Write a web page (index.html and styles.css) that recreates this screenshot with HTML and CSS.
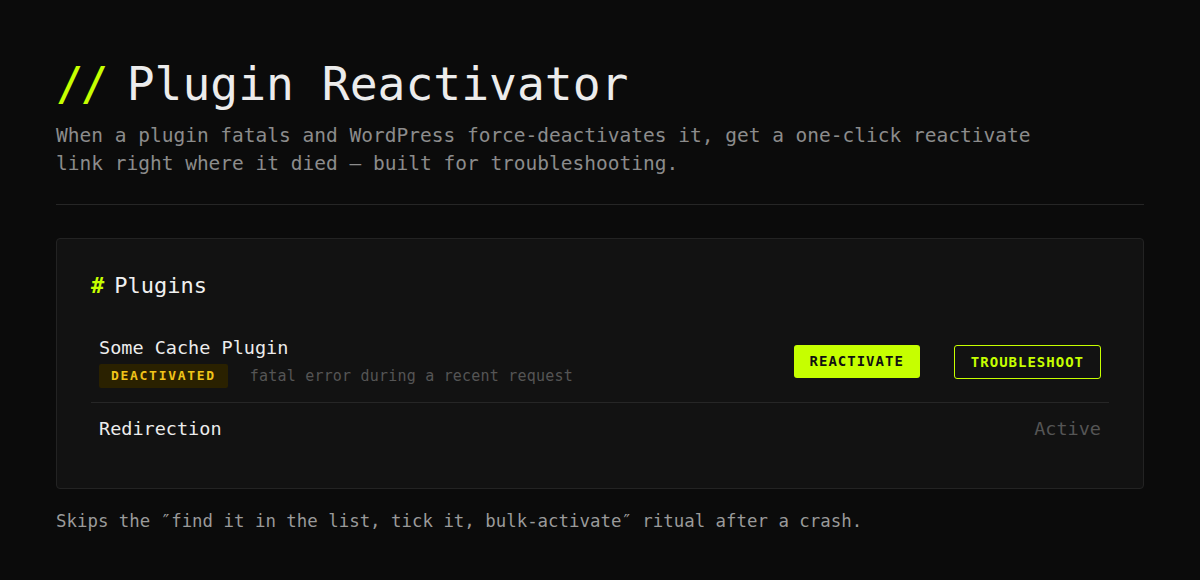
FILE: index.html
```html
<!DOCTYPE html>
<html>
	<head>
		<meta charset="UTF-8">
		<meta name="viewport" content="width=device-width, initial-scale=1">
		<title>Plugin Reactivator</title>
		<link rel="stylesheet" href="styles.css">
	</head>
	<body>
		<header class="hero">
			<h1><span class="slashes">//</span>Plugin Reactivator</h1>
			<p class="lead">When a plugin fatals and WordPress force-deactivates it, get a one-click reactivate link right where it died — built for troubleshooting.</p>
		</header>

		<section class="card">
			<h2><span class="hash">#</span>Plugins</h2>
			<ul class="plugins">
				<li class="plugin">
					<div class="info">
						<div class="name">Some Cache Plugin</div>
						<div class="meta">
							<span class="badge">DEACTIVATED</span>
							<span class="reason">fatal error during a recent request</span>
						</div>
					</div>
					<div class="actions">
						<a class="btn btn-primary" href="#">REACTIVATE</a>
						<a class="btn btn-outline" href="#">TROUBLESHOOT</a>
					</div>
				</li>
				<li class="plugin">
					<div class="info">
						<div class="name">Redirection</div>
					</div>
					<span class="status">Active</span>
				</li>
			</ul>
		</section>

		<p class="note">Skips the ″find it in the list, tick it, bulk-activate″ ritual after a crash.</p>
	</body>
</html>
```

FILE: styles.css
```css
body {
	background: #0b0b0b;
	color: #e8e8e8;
	font-family: "DejaVu Sans Mono", "Liberation Mono", monospace;
	margin: 0;
	padding: 57px 56px 0;
}

.hero {
	border-bottom: 1px solid #262626;
	padding-bottom: 26px;
}
.hero h1 {
	margin: 0;
	font-size: 46.3px;
	font-weight: 500;
	line-height: 55px;
	color: #ececec;
}
.slashes {
	color: #c6ff00;
	margin-right: 21px;
	letter-spacing: -3px;
}
.lead {
	margin: 10px 0 0;
	max-width: 1000px;
	font-size: 19.5px;
	line-height: 28px;
	color: #8c8c8c;
}

.card {
	margin-top: 33px;
	background: #121212;
	border: 1px solid #232323;
	border-radius: 4px;
	padding: 32px 34px 33px;
}
.card h2 {
	margin: 0;
	font-size: 22px;
	font-weight: 500;
	line-height: 29px;
	color: #f0f0f0;
}
.hash {
	color: #c6ff00;
	margin-right: 10px;
	font-weight: bold;
}

.plugins {
	list-style: none;
	margin: 21px 0 0;
	padding: 0;
}
.plugin {
	display: flex;
	align-items: center;
	justify-content: space-between;
	padding: 14px 8px;
}
.plugin + .plugin {
	border-top: 1px solid #262626;
	padding-top: 13px;
}
.name {
	font-size: 18.5px;
	line-height: 25px;
	color: #ececec;
}
.meta {
	display: flex;
	align-items: center;
	gap: 22px;
	margin-top: 4px;
}
.badge {
	background: #2a2100;
	color: #f0c419;
	font-size: 13px;
	font-weight: bold;
	letter-spacing: 1.7px;
	line-height: 24px;
	padding: 0 12px;
	border-radius: 2px;
}
.reason {
	font-size: 15px;
	color: #555;
	letter-spacing: 0.2px;
}

.actions {
	display: flex;
	align-items: center;
	gap: 34px;
}
.btn {
	display: inline-block;
	font-size: 14px;
	font-weight: bold;
	letter-spacing: 1px;
	text-decoration: none;
	border-radius: 3px;
	line-height: 20px;
}
.btn-primary {
	background: #c6ff00;
	color: #111;
	padding: 6px 16px 7px;
}
.btn-outline {
	border: 1px solid #c6ff00;
	color: #c6ff00;
	padding: 6px 16px;
}
.status {
	font-size: 18.5px;
	color: #555;
}

.note {
	margin: 20px 0 0;
	font-size: 17.4px;
	line-height: 24px;
	color: #9a9a9a;
}
```
